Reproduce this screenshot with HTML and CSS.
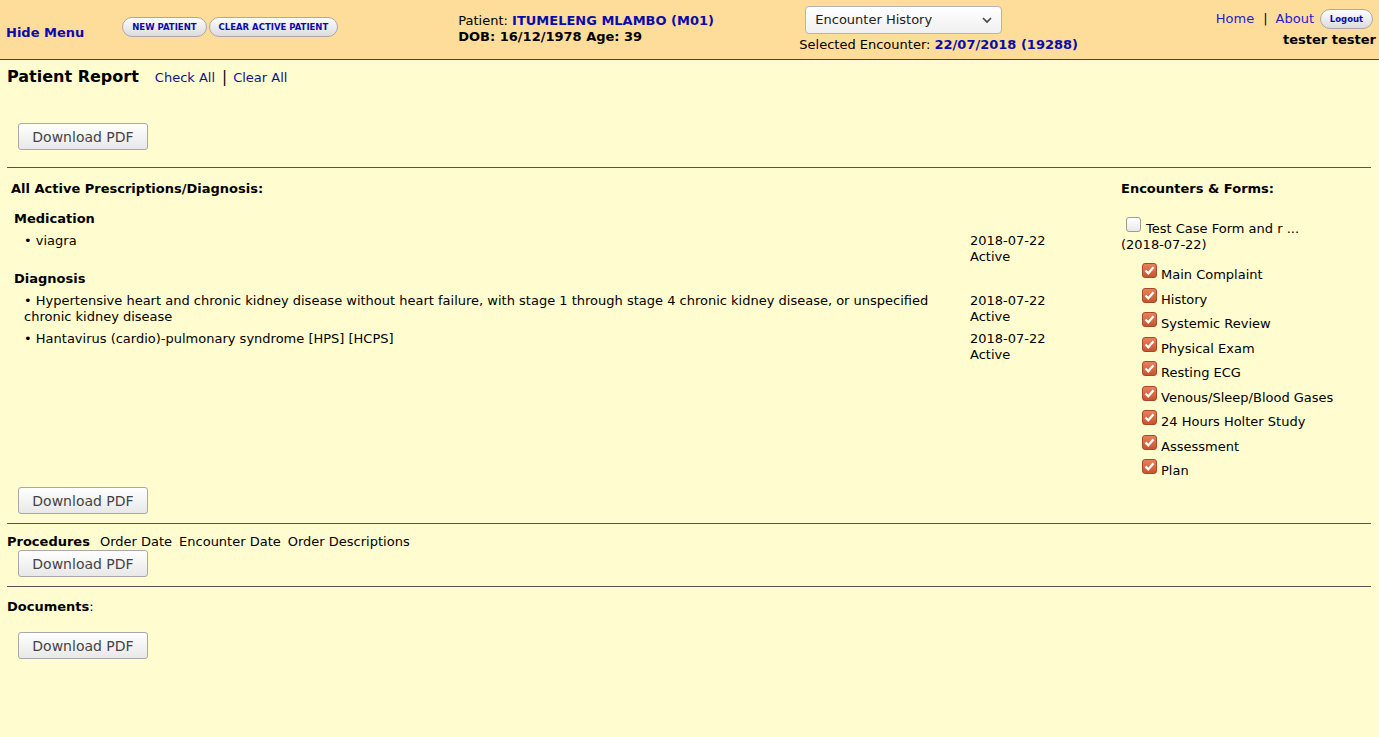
FILE: index.html
```html
<!DOCTYPE html>
<html>
<head>
    <title>Patient Report</title>
    <link rel="stylesheet" href="styles.css">
</head>
<body>
    <div class="topbar">
        <a class="hide-menu" href="#">Hide Menu</a>
        <div class="top-buttons">
            <button class="pill">NEW PATIENT</button>
            <button class="pill">CLEAR ACTIVE PATIENT</button>
        </div>
        <div class="patient-info">
            <div>Patient: <b class="hl">ITUMELENG MLAMBO (M01)</b></div>
            <div class="dob">DOB: 16/12/1978 Age: 39</div>
        </div>
        <div class="encounter">
            <div class="select">
                <span>Encounter History</span>
                <svg width="12" height="8" viewBox="0 0 12 8"><polyline points="2,2 6,6 10,2" fill="none" stroke="#444" stroke-width="1.6"/></svg>
            </div>
            <div class="selected">Selected Encounter: <b class="hl">22/07/2018 (19288)</b></div>
        </div>
        <div class="user-box">
            <div class="user-links">
                <a href="#">Home</a>
                <span class="bar">|</span>
                <a href="#">About</a>
                <button class="pill logout">Logout</button>
            </div>
            <div class="user-name">tester tester</div>
        </div>
    </div>

    <div class="report">
        <div class="report-head">
            <span class="title">Patient Report</span>
            <a href="#">Check All</a>
            <span class="sep">|</span>
            <a href="#">Clear All</a>
        </div>
        <button class="btn first">Download PDF</button>
        <hr>

        <div class="columns">
            <div class="rx">
                <div class="caption">All Active Prescriptions/Diagnosis:</div>
                <div class="group">Medication</div>
                <div class="rx-row">
                    <div>&bull; viagra</div>
                    <div>2018-07-22<br>Active</div>
                </div>
                <div class="group">Diagnosis</div>
                <div class="rx-row">
                    <div>&bull; Hypertensive heart and chronic kidney disease without heart failure, with stage 1 through stage 4 chronic kidney disease, or unspecified chronic kidney disease</div>
                    <div>2018-07-22<br>Active</div>
                </div>
                <div class="rx-row">
                    <div>&bull; Hantavirus (cardio)-pulmonary syndrome [HPS] [HCPS]</div>
                    <div>2018-07-22<br>Active</div>
                </div>
            </div>

            <div class="forms">
                <div class="caption">Encounters &amp; Forms:</div>
                <div class="enc-label"><span class="box"></span>Test Case Form and r ...</div>
                <div class="enc-date">(2018-07-22)</div>
                <ul class="form-list">
                    <li><span class="box on"><svg width="15" height="15" viewBox="0 0 15 15"><polyline points="3.5,7.5 6.3,10.3 11.5,4.2" fill="none" stroke="#fff" stroke-width="2.2"/></svg></span>Main Complaint</li>
                    <li><span class="box on"><svg width="15" height="15" viewBox="0 0 15 15"><polyline points="3.5,7.5 6.3,10.3 11.5,4.2" fill="none" stroke="#fff" stroke-width="2.2"/></svg></span>History</li>
                    <li><span class="box on"><svg width="15" height="15" viewBox="0 0 15 15"><polyline points="3.5,7.5 6.3,10.3 11.5,4.2" fill="none" stroke="#fff" stroke-width="2.2"/></svg></span>Systemic Review</li>
                    <li><span class="box on"><svg width="15" height="15" viewBox="0 0 15 15"><polyline points="3.5,7.5 6.3,10.3 11.5,4.2" fill="none" stroke="#fff" stroke-width="2.2"/></svg></span>Physical Exam</li>
                    <li><span class="box on"><svg width="15" height="15" viewBox="0 0 15 15"><polyline points="3.5,7.5 6.3,10.3 11.5,4.2" fill="none" stroke="#fff" stroke-width="2.2"/></svg></span>Resting ECG</li>
                    <li><span class="box on"><svg width="15" height="15" viewBox="0 0 15 15"><polyline points="3.5,7.5 6.3,10.3 11.5,4.2" fill="none" stroke="#fff" stroke-width="2.2"/></svg></span>Venous/Sleep/Blood Gases</li>
                    <li><span class="box on"><svg width="15" height="15" viewBox="0 0 15 15"><polyline points="3.5,7.5 6.3,10.3 11.5,4.2" fill="none" stroke="#fff" stroke-width="2.2"/></svg></span>24 Hours Holter Study</li>
                    <li><span class="box on"><svg width="15" height="15" viewBox="0 0 15 15"><polyline points="3.5,7.5 6.3,10.3 11.5,4.2" fill="none" stroke="#fff" stroke-width="2.2"/></svg></span>Assessment</li>
                    <li><span class="box on"><svg width="15" height="15" viewBox="0 0 15 15"><polyline points="3.5,7.5 6.3,10.3 11.5,4.2" fill="none" stroke="#fff" stroke-width="2.2"/></svg></span>Plan</li>
                </ul>
            </div>
        </div>

        <button class="btn after-cols">Download PDF</button>
        <hr>

        <div class="proc-line">
            <b>Procedures</b>
            <span>Order Date</span>
            <span>Encounter Date</span>
            <span>Order Descriptions</span>
        </div>
        <button class="btn after-proc">Download PDF</button>
        <hr>

        <div class="docs-line"><b>Documents</b>:</div>
        <button class="btn after-docs">Download PDF</button>
    </div>
</body>
</html>
```

FILE: styles.css
```css
*{
    padding: 0;
    margin: 0;
    box-sizing: border-box;
}
ul,li{
    list-style: none;
}
body{
    background: #fffcd0;
    font-family: "DejaVu Sans", Verdana, sans-serif;
    font-size: 13px;
    line-height: 16px;
    color: #000;
}
a{
    text-decoration: none;
}

/* top bar */
.topbar{
    display: flex;
    height: 60px;
    background: #fddd99;
    border-bottom: 1px solid #444;
}
.topbar > *{
    flex-shrink: 0;
}
.hide-menu{
    margin-left: 6px;
    padding-top: 25px;
    font-weight: bold;
    color: #0b0bab;
}
.top-buttons{
    display: flex;
    gap: 2px;
    margin-left: 38px;
    padding-top: 17px;
}
.pill{
    height: 20px;
    padding: 0 9px;
    border: 1px solid #a9a9a9;
    border-radius: 10px;
    background: linear-gradient(#fdfdfd, #dcdcdc);
    font-family: "DejaVu Sans", Verdana, sans-serif;
    font-size: 8.5px;
    font-weight: bold;
    color: #0b0bab;
    cursor: pointer;
}
.patient-info{
    width: 341px;
    margin-left: 120px;
    padding-top: 13px;
}
.hl{
    color: #0b0bab;
}
.dob{
    font-weight: bold;
}
.encounter{
    width: 300px;
}
.select{
    display: flex;
    align-items: center;
    justify-content: space-between;
    width: 197px;
    height: 28px;
    margin: 6px 0 3px 6px;
    padding: 0 8px 0 9px;
    border: 1px solid #b5b5b5;
    border-radius: 4px;
    background: linear-gradient(#ffffff, #f0f0f0);
    color: #222;
}
.selected{
    margin-top: 1px;
}
.user-box{
    margin-left: auto;
    padding: 8px 3px 0 0;
    text-align: right;
}
.user-links{
    display: flex;
    align-items: center;
    justify-content: flex-end;
    height: 21px;
    margin-right: 3px;
}
.user-links a{
    color: #2a1ad0;
}
.bar{
    margin: 0 8px 0 9px;
}
.logout{
    width: 53px;
    height: 20px;
    margin-left: 6px;
    padding: 0;
    font-size: 8.5px;
}
.user-name{
    margin-top: 3px;
    font-weight: bold;
}

/* report body */
.report{
    padding: 0 8px 40px 7px;
}
.report-head{
    display: flex;
    align-items: baseline;
    height: 18px;
    margin-top: 9px;
}
.title{
    font-size: 16px;
    font-weight: bold;
    margin-right: 16px;
}
.report-head a{
    color: #12128a;
}
.sep{
    margin: 0 6px 0 7px;
    font-size: 15px;
}
.btn{
    display: block;
    width: 130px;
    height: 27px;
    margin-left: 11px;
    border: 1px solid #a8a8a8;
    border-radius: 3px;
    background: linear-gradient(#ffffff, #e8e8e8);
    font-family: "DejaVu Sans", Verdana, sans-serif;
    font-size: 14px;
    color: #444;
    cursor: pointer;
}
.btn.first{
    margin-top: 36px;
}
hr{
    height: 0;
    border: 0;
    border-top: 1px solid #555;
}
.btn.first + hr{
    margin-top: 17px;
}
.columns{
    display: flex;
    margin-top: 13px;
}
.caption{
    font-weight: bold;
}
.rx{
    flex: 1;
}
.rx .caption{
    margin-left: 4px;
}
.group{
    margin: 14px 0 6px 7px;
    font-weight: bold;
}
.rx-row + .group{
    margin-top: 6px;
}
.rx-row{
    display: grid;
    grid-template-columns: 946px auto;
    margin-left: 17px;
}
.rx-row + .rx-row{
    margin-top: 6px;
}
.forms{
    width: 250px;
}
.box{
    display: inline-block;
    width: 15px;
    height: 15px;
    margin-right: 4px;
    border: 1px solid #9a9a9a;
    border-radius: 3px;
    background: linear-gradient(#ffffff, #e9e9e9);
    flex-shrink: 0;
}
.box.on{
    border-color: #a9472a;
    background: linear-gradient(#e5825c, #c8552f);
}
.box svg{
    display: block;
    margin: -1px;
}
.enc-label{
    display: flex;
    align-items: flex-end;
    height: 20px;
    margin-top: 20px;
}
.enc-label .box{
    margin: 0 5px 5px 5px;
}
.form-list{
    display: flex;
    flex-direction: column;
    gap: 4.5px;
    margin: 10px 0 0 21px;
}
.form-list li{
    display: flex;
    align-items: flex-end;
    height: 20px;
}
.form-list .box{
    margin-bottom: 5px;
}
.btn.after-cols{
    margin-top: 8px;
}
.btn.after-cols + hr{
    margin-top: 9px;
}
.proc-line{
    display: flex;
    gap: 7px;
    margin-top: 10px;
}
.proc-line b{
    margin-right: 3px;
}
.btn.after-proc{
    margin-top: 0;
}
.btn.after-proc + hr{
    margin-top: 9px;
}
.docs-line{
    margin-top: 12px;
}
.btn.after-docs{
    margin-top: 17px;
}
```
